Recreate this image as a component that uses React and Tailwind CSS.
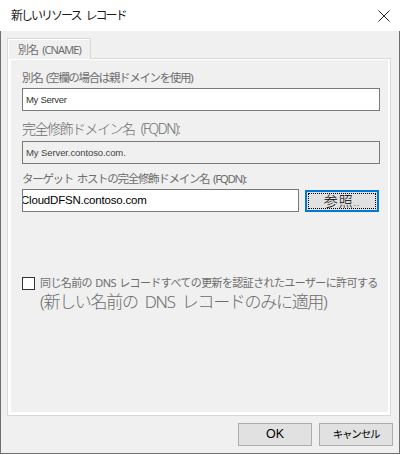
export default function App() {
  const jp = { fontFamily: '"Noto Sans", "Noto Sans CJK JP", sans-serif' };
  return (
    <div className="w-[400px] h-[455px] flex flex-col bg-white" style={jp}>
      {/* title bar */}
      <div className="h-[31px] bg-white flex items-center justify-between pl-[11px] pr-[10px]">
        <span className="text-[12px] tracking-[-2px] [word-spacing:4px] text-[#1a1a1a] leading-none">新しいリソース レコード</span>
        <svg width="12" height="12" viewBox="0 0 12 12">
          <path d="M0.5 0.5 L11.5 11.5 M11.5 0.5 L0.5 11.5" stroke="#222" strokeWidth="1" />
        </svg>
      </div>
      {/* body */}
      <div className="h-[423px] bg-[#f0f0f0] border-x border-b border-[#707070] flex flex-col pt-[7px]">
        {/* tab */}
        <div className="ml-[6px] w-[84px] h-[21px] -mb-px relative z-10 border-t border-x border-[#d9d9d9] bg-[#f0f0f0]">
          <div className="h-full border-t border-l border-white flex items-center pl-[9px]">
            <span className="text-[11px] tracking-[-0.9px] [word-spacing:2px] text-[#6d6d6d] leading-none">別名 (CNAME)</span>
          </div>
        </div>
        {/* panel */}
        <div className="ml-[6px] mr-[8px] h-[358px] border border-[#d9d9d9]">
          <div className="h-full border-l-[3px] border-t border-r-2 border-b-[3px] border-white flex flex-col pl-[11px] pr-[8px] pt-[10px]">
            <div className="text-[11.5px] leading-[16px] tracking-[-1.35px] [word-spacing:2px] text-[#6d6d6d]">別名 (空欄の場合は親ドメインを使用)</div>
            <div className="mt-[2px] h-[23px] border border-[#7a7a7a] bg-white flex items-center pl-[3px]">
              <span className="text-[9.5px] tracking-[-0.3px] text-[#333] leading-none" style={{ fontFamily: '"Liberation Sans", sans-serif' }}>My Server</span>
            </div>
            <div className="mt-[9px] text-[14px] leading-[18px] tracking-[-1.5px] [word-spacing:4px] text-[#6d6d6d] font-light">完全修飾ドメイン名 (FQDN):</div>
            <div className="mt-[3px] h-[23px] border border-[#7a7a7a] bg-[#f0f0f0] flex items-center pl-[3px]">
              <span className="text-[9.5px] tracking-[-0.1px] text-[#444] leading-none" style={{ fontFamily: '"Liberation Sans", sans-serif' }}>My Server.contoso.com.</span>
            </div>
            <div className="mt-[7px] text-[11.5px] leading-[16px] tracking-[-1.3px] [word-spacing:2px] text-[#6d6d6d]">ターゲット ホストの完全修飾ドメイン名 (FQDN):</div>
            <div className="mt-[2px] flex items-center gap-[6px]">
              <div className="w-[277px] h-[23px] border border-[#7a7a7a] bg-white flex items-center overflow-hidden">
                <span className="text-[11.5px] tracking-[-0.2px] text-black leading-none -ml-[2px]" style={{ fontFamily: '"Liberation Sans", sans-serif' }}>CloudDFSN.contoso.com</span>
              </div>
              <div className="w-[74px] h-[22px] border-2 border-[#0078d7] bg-[#e1e1e1] p-px">
                <div className="h-full border border-dotted border-black flex items-center justify-center">
                  <span className="text-[14px] leading-none text-black tracking-[1px] font-light">参照<span className="text-[9px] tracking-[1px]">..</span></span>
                </div>
              </div>
            </div>
            <div className="mt-[63px] flex">
              <div className="w-[13px] h-[13px] border border-[#333] bg-white mt-[2px]" />
              <div className="ml-[5px] flex flex-col">
                <div className="text-[11px] leading-[15px] tracking-[-0.6px] [word-spacing:1px] text-[#6d6d6d] whitespace-nowrap">同じ名前の DNS レコードすべての更新を認証されたユーザーに許可する</div>
                <div className="mt-[3px] text-[17px] leading-[18px] tracking-[-1.3px] [word-spacing:4px] text-[#6d6d6d] whitespace-nowrap font-light">(新しい名前の DNS レコードのみに適用)</div>
              </div>
            </div>
          </div>
        </div>
        {/* buttons */}
        <div className="mt-[7px] flex justify-end gap-[7px] pr-[6px]">
          <div className="w-[74px] h-[23px] border border-[#adadad] bg-[#e1e1e1] flex items-center justify-center">
            <span className="text-[12.5px] leading-none text-black" style={{ fontFamily: '"Liberation Sans", sans-serif' }}>OK</span>
          </div>
          <div className="w-[74px] h-[23px] border border-[#adadad] bg-[#e1e1e1] flex items-center justify-center">
            <span className="text-[10.5px] leading-none tracking-[-1.2px] text-black">キャンセル</span>
          </div>
        </div>
      </div>
    </div>
  );
}
